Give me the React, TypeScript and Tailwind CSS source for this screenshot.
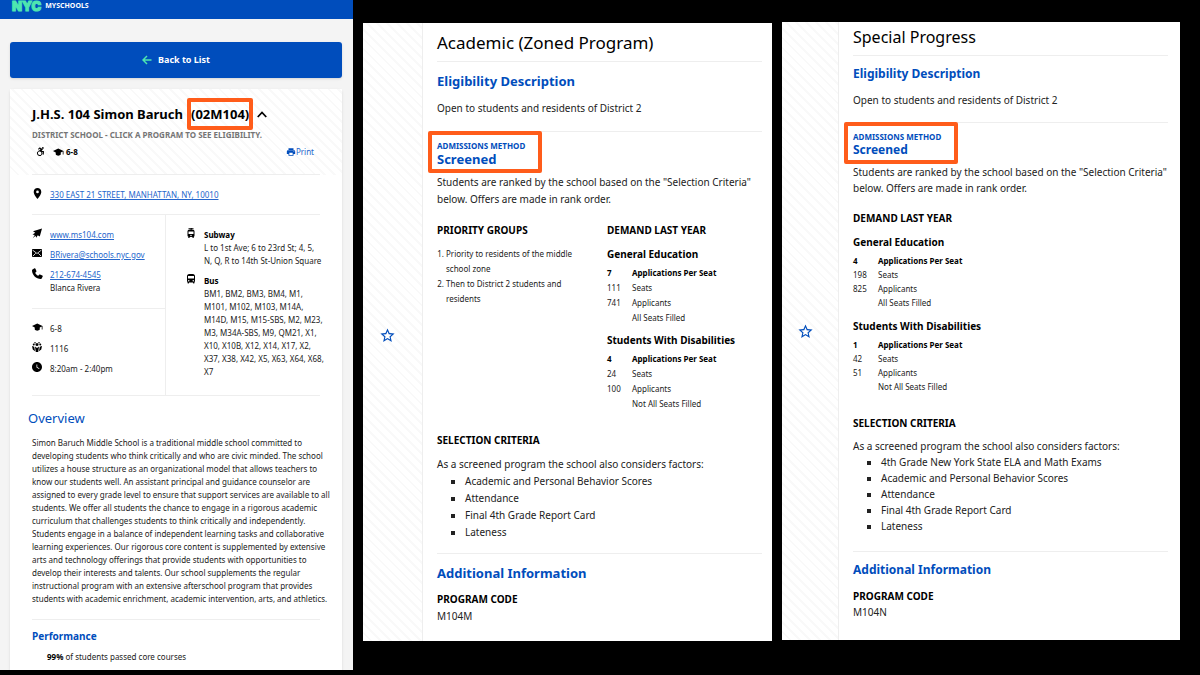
import { type ReactNode } from 'react'
import {
  MdDirectionsBus,
  MdLocationOn,
  MdPrint,
  MdStarBorder,
  MdTram,
  MdWatchLater,
} from 'react-icons/md'
import { FaAccessibleIcon } from 'react-icons/fa'

type Demand = { group: string; perSeat: number; seats: number; applicants: number; note: string }

type ProgramData = {
  title: string
  code: string
  priority?: string[]
  demand: Demand[]
  criteria: string[]
}

const academic: ProgramData = {
  title: 'Academic (Zoned Program)',
  code: 'M104M',
  priority: ['Priority to residents of the middle school zone', 'Then to District 2 students and residents'],
  demand: [
    { group: 'General Education', perSeat: 7, seats: 111, applicants: 741, note: 'All Seats Filled' },
    { group: 'Students With Disabilities', perSeat: 4, seats: 24, applicants: 100, note: 'Not All Seats Filled' },
  ],
  criteria: ['Academic and Personal Behavior Scores', 'Attendance', 'Final 4th Grade Report Card', 'Lateness'],
}

const special: ProgramData = {
  title: 'Special Progress',
  code: 'M104N',
  demand: [
    { group: 'General Education', perSeat: 4, seats: 198, applicants: 825, note: 'All Seats Filled' },
    { group: 'Students With Disabilities', perSeat: 1, seats: 42, applicants: 51, note: 'Not All Seats Filled' },
  ],
  criteria: [
    '4th Grade New York State ELA and Math Exams',
    'Academic and Personal Behavior Scores',
    'Attendance',
    'Final 4th Grade Report Card',
    'Lateness',
  ],
}

const ArrowIcon = () => (
  <svg viewBox="0 0 20 20" className="size-[10px]" fill="none" stroke="#4ee6b0" strokeWidth="3">
    <path d="M19 10H3M10 2 2 10l8 8" />
  </svg>
)

const CaretIcon = () => (
  <svg viewBox="0 0 20 14" className="h-[7px] w-[10px]" fill="none" stroke="currentColor" strokeWidth="3.500">
    <path d="M1.500 12 10 3l8.500 9" />
  </svg>
)

const PhoneIcon = () => (
  <svg viewBox="0 0 20 20" className="size-[11px] shrink-0" fill="currentColor">
    <path d="M1 2.500 4.500.5c.8-.4 1.500 0 1.800.7L8 5.500c.3.7 0 1.300-.5 1.800L5.800 8.800c1 2.200 3 4.300 5.400 5.400l1.500-1.700c.5-.5 1.100-.8 1.800-.5l4.300 1.700c.7.3 1.100 1 .7 1.800L17.500 19c-.3.6-.8 1-1.500 1C7.500 20 0 12.500 0 4c0-.7.4-1.200 1-1.500Z" />
  </svg>
)

const PlaneIcon = () => (
  <svg viewBox="0 0 20 20" className="size-[11px]" fill="currentColor">
    <path d="M20 0 15.500 16 11.500 13.500 8.500 18.500 7 14.500 1.500 19.500 5.500 13 1 12 6.500 8.500 2 5.500Z" />
  </svg>
)

const MailIcon = () => (
  <svg viewBox="0 0 20 16" className="h-2 w-[10px]">
    <rect width="20" height="16" fill="currentColor" />
    <path d="M1 2l9 7 9-7M1.500 14.500l6-6M18.500 14.500l-6-6" fill="none" stroke="#fff" strokeWidth="1.600" />
  </svg>
)

const CapIcon = () => (
  <svg viewBox="0 0 22 16" className="h-2 w-[11px] shrink-0" fill="currentColor">
    <path d="M10.500 1 21 6v7h-1.500V7l-4 2v4c-2 3-8 3-10 0V9L0 6Z" />
  </svg>
)

const PeopleIcon = () => (
  <svg viewBox="0 0 20 20" className="size-[10px]" fill="currentColor">
    <circle cx="10" cy="5" r="3" />
    <circle cx="3.500" cy="5" r="2" />
    <circle cx="16.500" cy="5" r="2" />
    <circle cx="6" cy="1.500" r="1.500" />
    <circle cx="14" cy="1.500" r="1.500" />
    <path d="M6 9l4 3 4-3-1.500 11h-5zM0 8l4.500 1.500L6 18.500 1.500 15zM20 8l-4.500 1.500L14 18.500l4.500-3.500z" />
  </svg>
)

// orange callout drawn over the page
const Callout = ({ className }: { className: string }) => (
  <span className={`pointer-events-none absolute rounded-[2px] border-4 border-[#ff5c1a] ${className}`} />
)

const Row = ({ icon, children }: { icon: ReactNode; children: ReactNode }) => (
  <li className="flex gap-2">
    <span className="flex h-[10px] w-[10px] shrink-0 items-center justify-center text-black">{icon}</span>
    <div className="min-w-0 flex-1">{children}</div>
  </li>
)

const link = 'text-[#2566cc] underline'

const SchoolPage = () => (
  <main className="bg-[#f4f4f4]">
    <header className="flex items-start gap-1 bg-[#004dbc] pb-[7px] pl-3 leading-3">
      <span className="font-['Inter'] text-[13px] font-black text-[#4ee6b0] [-webkit-text-stroke:1px_#4ee6b0]">NYC</span>
      <span className="text-[7px] font-bold text-white">MYSCHOOLS</span>
    </header>

    <div className="pt-[23px] pr-[11px] pl-[10px]">
      <button className="flex h-9 w-full items-center justify-center gap-[6px] rounded-[3px] bg-[#004dbc] text-[9px] font-bold text-white shadow">
        <ArrowIcon />
        Back to List
      </button>

      <section className="mt-[11px] rounded-t-[3px] bg-white text-[8px] leading-[13px] text-[#222] shadow">
        <div className="bg-[repeating-linear-gradient(45deg,#fff_0_5px,#f9f9f9_5px_7px)] px-[22px] pt-[13px]">
          <h1 className="flex items-center gap-2 text-[13px] leading-6 font-bold whitespace-nowrap text-black">
            J.H.S. 104 Simon Baruch
            <span className="relative">
              (02M104)
              <Callout className="-inset-x-1 -top-1 h-8" />
            </span>
            <CaretIcon />
          </h1>
          <p className="mt-[2px] font-bold whitespace-nowrap text-[#757575]">DISTRICT SCHOOL - CLICK A PROGRAM TO SEE ELIGIBILITY.</p>
          <div className="mt-1 flex items-center border-b border-[#eee] pr-[6px] pb-4 pl-1 font-bold text-black">
            <FaAccessibleIcon className="mr-2 text-[9px]" />
            <CapIcon />
            <span className="ml-[2px]">6-8</span>
            <a href="#print" className="ml-auto flex items-center font-normal text-[#2566cc]">
              <MdPrint className="text-[10px] text-[#004dbc]" />
              Print
            </a>
          </div>
        </div>

        <div className="px-[22px] pb-[7px]">
          <ul className="border-b border-[#eee] py-[13px]">
            <Row icon={<MdLocationOn className="shrink-0 text-[13px]" />}>
              <a href="#map" className={link}>330 EAST 21 STREET, MANHATTAN, NY, 10010</a>
            </Row>
          </ul>

          <div className="grid grid-cols-[134fr_154fr] border-b border-[#eee]">
            <div className="border-r border-[#eee]">
              <ul className="space-y-[7px] border-b border-[#eee] pt-[13px] pb-[14px]">
                <Row icon={<PlaneIcon />}><a href="#site" className={link}>www.ms104.com</a></Row>
                <Row icon={<MailIcon />}><a href="#mail" className={link}>BRivera@schools.nyc.gov</a></Row>
                <Row icon={<PhoneIcon />}>
                  <a href="#phone" className={link}>212-674-4545</a>
                  <p>Blanca Rivera</p>
                </Row>
              </ul>
              <ul className="space-y-[7px] pt-[13px] pb-5">
                <Row icon={<CapIcon />}>6-8</Row>
                <Row icon={<PeopleIcon />}>1116</Row>
                <Row icon={<MdWatchLater className="shrink-0 text-[12px]" />}>8:20am - 2:40pm</Row>
              </ul>
            </div>
            <ul className="-mr-1 space-y-[7px] pt-[13px] pl-5">
              <Row icon={<MdTram className="shrink-0 text-[12px]" />}>
                <h2 className="font-bold text-black">Subway</h2>
                <p>
                  L to 1st Ave; 6 to 23rd St; 4, 5,
                  <br />
                  N, Q, R to 14th St-Union Square
                </p>
              </Row>
              <Row icon={<MdDirectionsBus className="shrink-0 text-[12px]" />}>
                <h2 className="font-bold text-black">Bus</h2>
                <p>
                  BM1, BM2, BM3, BM4, M1, M101, M102, M103, M14A, M14D, M15, M15-SBS, M2, M23, M3, M34A-SBS, M9, QM21, X1,
                  X10, X10B, X12, X14, X17, X2, X37, X38, X42, X5, X63, X64, X68, X7
                </p>
              </Row>
            </ul>
          </div>

          <h2 className="mt-[14px] -ml-1 text-[13px] leading-4 text-[#004dbc]">Overview</h2>
          <p className="mt-[10px] -mr-3">
            Simon Baruch Middle School is a traditional middle school committed to developing students who think
            critically and who are civic minded. The school utilizes a house structure as an organizational model that
            allows teachers to know our students well. An assistant principal and guidance counselor are assigned to
            every grade level to ensure that support services are available to all students. We offer all students the
            chance to engage in a rigorous academic curriculum that challenges students to think critically and
            independently. Students engage in a balance of independent learning tasks and collaborative learning
            experiences. Our rigorous core content is supplemented by extensive arts and technology offerings that
            provide students with opportunities to develop their interests and talents. Our school supplements the
            regular instructional program with an extensive afterschool program that provides students with academic
            enrichment, academic intervention, arts, and athletics.
          </p>

          <h2 className="mt-[14px] border-t border-[#eee] pt-2 text-[10px] leading-4 font-bold text-[#004dbc]">Performance</h2>
          <p className="mt-[6px] pl-[15px]"><b className="text-black">99%</b> of students passed core courses</p>
        </div>
      </section>
    </div>
  </main>
)

const Program = ({ data, compact = false }: { data: ProgramData; compact?: boolean }) => {
  const heading = `font-bold text-[#004dbc] leading-5 ${compact ? 'mt-2 text-[12px]' : 'mt-[9px] text-[13px]'}`
  return (
    <article className={`flex bg-white text-[10px] text-[#222] ${compact ? 'mt-[22px] leading-4' : 'mt-[23px] leading-[17px]'}`}>
      <div className={`flex shrink-0 items-center justify-center border-r border-[#eee] bg-[repeating-linear-gradient(45deg,#fff_0_5px,#f9f9f9_5px_7px)] pr-[10px] ${compact ? 'w-[57px]' : 'w-[60px] pt-[6px]'}`}>
        <button aria-label="Save program" className="text-[17px] text-[#004dbc]"><MdStarBorder /></button>
      </div>

      <div className={`min-w-0 flex-1 pl-[14px] ${compact ? 'pt-[3px] pr-3 pb-5' : 'pt-2 pr-[10px] pb-4'}`}>
        <h1 className={`border-b border-[#eee] pb-[6px] leading-6 text-black ${compact ? 'text-[16px]' : 'text-[17px]'}`}>{data.title}</h1>
        <h2 className={heading}>Eligibility Description</h2>
        <p className={`border-b border-[#eee] pb-[14px] ${compact ? 'mt-2' : 'mt-[9px]'}`}>Open to students and residents of District 2</p>

        <div className="relative mt-2 text-[#004dbc]">
          <Callout className="-top-[9px] -left-[9px] h-[42px] w-[114px]" />
          <h3 className="text-[8px] leading-3 font-bold">ADMISSIONS METHOD</h3>
          <p className={`font-bold ${compact ? 'text-[12px] leading-[13px]' : 'text-[13px] leading-[15px]'}`}>Screened</p>
        </div>
        <p className={compact ? 'mt-2' : 'mt-[7px]'}>Students are ranked by the school based on the "Selection Criteria" below. Offers are made in rank order.</p>

        <div className="mt-[14px] flex">
          {data.priority && (
            <div className="w-[170px] shrink-0 pr-5">
              <h3 className="font-bold text-black">PRIORITY GROUPS</h3>
              <ol className="mt-[7px] list-decimal pl-[9px] text-[8px] leading-[15px] marker:text-[8px]">
                {data.priority.map((p) => <li key={p}>{p}</li>)}
              </ol>
            </div>
          )}
          <div>
            <h3 className="font-bold text-black">DEMAND LAST YEAR</h3>
            {data.demand.map((d) => (
              <table key={d.group} className={`text-left text-[8px] ${compact ? 'mt-2 leading-[14px]' : 'mt-[7px] leading-[15px]'}`}>
                <caption className={`text-left text-[10px] font-bold whitespace-nowrap text-black ${compact ? 'pb-1 leading-4' : 'pb-[2px] leading-[17px]'}`}>{d.group}</caption>
                <tbody>
                  <tr className="font-bold text-black"><td className="w-[25px]">{d.perSeat}</td><td>Applications Per Seat</td></tr>
                  <tr><td>{d.seats}</td><td>Seats</td></tr>
                  <tr><td>{d.applicants}</td><td>Applicants</td></tr>
                  <tr><td /><td>{d.note}</td></tr>
                </tbody>
              </table>
            ))}
          </div>
        </div>

        <h3 className="mt-[21px] font-bold text-black">SELECTION CRITERIA</h3>
        <p className="mt-[7px]">As a screened program the school also considers factors:</p>
        <ul className={`list-[square] border-b border-[#eee] pl-7 ${compact ? 'pb-[17px]' : 'pb-3'}`}>
          {data.criteria.map((c) => <li key={c}>{c}</li>)}
        </ul>

        <h2 className={heading}>Additional Information</h2>
        <h3 className="mt-2 font-bold text-black">PROGRAM CODE</h3>
        <p>{data.code}</p>
      </div>
    </article>
  )
}

export default function App() {
  return (
    <div className="grid min-h-screen grid-cols-[353fr_409fr_398fr] items-start gap-x-[10px] bg-black pr-5 font-['Noto_Sans',sans-serif]">
      <SchoolPage />
      <Program data={academic} />
      <Program data={special} compact />
    </div>
  )
}
